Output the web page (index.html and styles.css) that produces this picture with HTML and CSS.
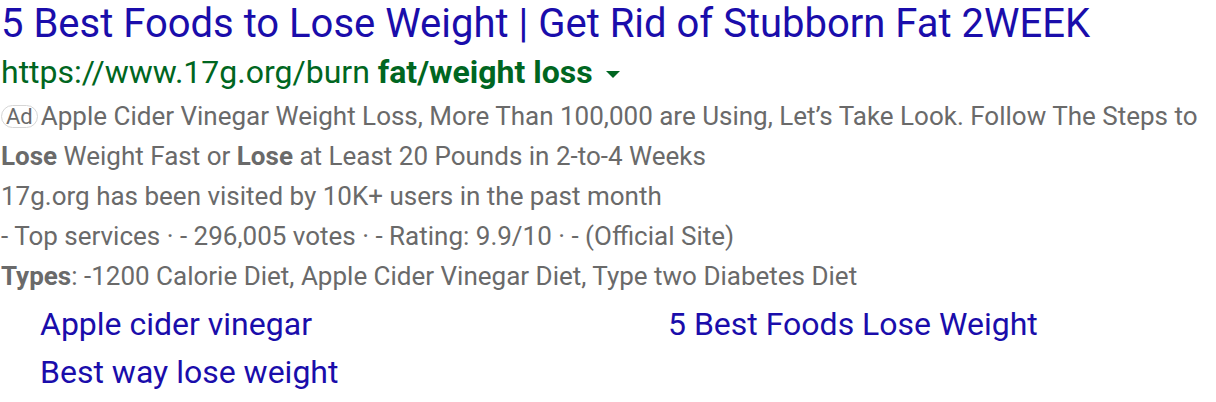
FILE: index.html
```html
<!DOCTYPE html>
<html>
<head>
<meta charset="utf-8">
<link rel="stylesheet" href="styles.css">
</head>
<body>
<div class="ad">
  <h3 class="title"><a href="#">5 Best Foods to Lose Weight | Get Rid of Stubborn Fat 2WEEK</a></h3>
  <div class="url">https://www.17g.org/burn <b>fat/weight loss</b> <span class="caret"></span></div>
  <div class="desc">
    <div class="line"><span class="badge">Ad</span>Apple Cider Vinegar Weight Loss, More Than 100,000 are Using, Let’s Take Look. Follow The Steps to</div>
    <div class="line"><b>Lose</b> Weight Fast or <b>Lose</b> at Least 20 Pounds in 2-to-4 Weeks</div>
    <div class="line">17g.org has been visited by 10K+ users in the past month</div>
    <div class="line">- Top services · - 296,005 votes · - Rating: 9.9/10 · - (Official Site)</div>
    <div class="line"><b>Types</b>: -1200 Calorie Diet, Apple Cider Vinegar Diet, Type two Diabetes Diet</div>
  </div>
  <div class="sitelinks">
    <a href="#">Apple cider vinegar</a>
    <a href="#">5 Best Foods Lose Weight</a>
    <a href="#">Best way lose weight</a>
  </div>
</div>
</body>
</html>
```
FILE: styles.css
```css
html, body {
  margin: 0;
  padding: 0;
  background: #fff;
}
body {
  font-family: Roboto, "Liberation Sans", Arial, sans-serif;
}
.ad {
  padding: 0 0 0 1px;
}
.title {
  margin: 0;
  font-weight: 400;
  font-size: 40px;
  line-height: 48px;
}
.title a {
  color: #1a0dab;
  text-decoration: none;
}
.url {
  color: #006621;
  font-size: 32px;
  line-height: 48px;
}
.url b {
  font-weight: 700;
}
.caret {
  display: inline-block;
  width: 0;
  height: 0;
  border-left: 7px solid transparent;
  border-right: 7px solid transparent;
  border-top: 7px solid #006621;
  vertical-align: middle;
  margin-left: 5px;
}
.desc {
  color: #6a6a6a;
  font-size: 26px;
  line-height: 40px;
}
.desc b {
  font-weight: 700;
}
.badge {
  display: inline-block;
  border: 1px solid #d6d6d6;
  border-radius: 12px;
  font-size: 22px;
  line-height: 21px;
  padding: 0 4px;
  margin-right: 3px;
  vertical-align: 1px;
}
.sitelinks {
  display: grid;
  grid-template-columns: 628px auto;
  padding-left: 39px;
  padding-top: 4px;
  font-size: 32px;
  line-height: 48px;
}
.sitelinks a {
  color: #1a0dab;
  text-decoration: none;
}
```
